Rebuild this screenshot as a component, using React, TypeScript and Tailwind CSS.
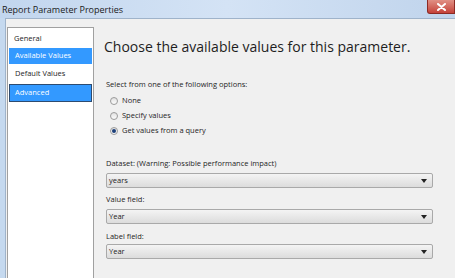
import React from "react";

const font = { fontFamily: "'Open Sans', 'Noto Sans', sans-serif" };

function Radio({ checked, label }: { checked?: boolean; label: string }) {
  return (
    <div className="flex items-center gap-[4px] h-[15px]">
      <div className="w-[8px] h-[8px] rounded-full border border-[#9a9a9a] bg-gradient-to-b from-[#e2e2e2] to-[#fbfbfb] flex items-center justify-center">
        {checked && <div className="w-[4px] h-[4px] rounded-full bg-[#1c3f7a]" />}
      </div>
      <span className="text-[7.5px] text-[#1e1e1e]">{label}</span>
    </div>
  );
}

function Select({ value }: { value: string }) {
  return (
    <div className="h-[15px] w-[327px] rounded-[2px] border border-[#a9a9a9] bg-gradient-to-b from-[#f4f4f4] to-[#dcdcdc] flex items-center justify-between pl-[2px] pr-[5px]">
      <span className="text-[7.5px] text-[#1e1e1e] leading-none">{value}</span>
      <svg width="6" height="4" viewBox="0 0 6 4">
        <path d="M0 0 H6 L3 4 Z" fill="#222" />
      </svg>
    </div>
  );
}

export default function App() {
  return (
    <div className="w-[455px] h-[278px] overflow-hidden bg-[#c5d9ef] flex flex-col" style={font}>
      <div className="h-[18px] flex items-start justify-between bg-gradient-to-r from-[#c2d6ee] via-[#d4e3f5] to-[#c0d4ec]">
        <span className="text-[9px] text-[#1a1a1a] pl-[2px] pt-[5px] leading-none">Report Parameter Properties</span>
        <div className="w-[28px] h-[14px] rounded-bl-[3px] bg-gradient-to-b from-[#e08f84] to-[#c4413a] border border-[#8c2a24] border-t-0 flex items-center justify-center">
          <svg width="9" height="8" viewBox="0 0 9 8">
            <path d="M1 1 L8 7 M8 1 L1 7" stroke="#fff" strokeWidth="2" strokeLinecap="round" />
          </svg>
        </div>
      </div>
      <div className="flex-1 flex pl-[5px]">
        <div className="flex-1 bg-[#f0f0f0] border-l border-t border-[#9fb3ca] flex pl-[1px] pt-[8px]">
          <div className="w-[87px] bg-white border border-[#a0a0a0] border-b-0 pt-[2px] px-[1px] text-[7.5px]">
            <div className="h-[18px] flex items-center pl-[5px] text-[#1e1e1e]">General</div>
            <div className="h-[16px] flex items-center pl-[6px] bg-[#3399ff] text-white">Available Values</div>
            <div className="h-[20px] flex items-center pl-[6px] text-[#1e1e1e]">Default Values</div>
            <div className="h-[18px] flex items-center pl-[5px] bg-[#3399ff] text-white border border-[#2d4b70]">Advanced</div>
          </div>
          <div className="flex-1 pl-[12px] pt-[9px]">
            <div className="-ml-[2px] text-[14px] text-[#1e1e1e] leading-[22px]">Choose the available values for this parameter.</div>
            <div className="mt-[20px] text-[7.5px] text-[#1e1e1e] leading-[12px]">Select from one of the following options:</div>
            <div className="pl-[4px] mt-[3px] flex flex-col">
              <Radio label="None" />
              <Radio label="Specify values" />
              <Radio checked label="Get values from a query" />
            </div>
            <div className="flex flex-col">
              <div className="mt-[19px] text-[7.5px] text-[#1e1e1e] leading-[12px]">Dataset: (Warning: Possible performance impact)</div>
              <div className="mt-[4px]"><Select value="years" /></div>
              <div className="mt-[5px] text-[7.5px] text-[#1e1e1e] leading-[12px]">Value field:</div>
              <div className="mt-[4px]"><Select value="Year" /></div>
              <div className="mt-[6px] text-[7.5px] text-[#1e1e1e] leading-[12px]">Label field:</div>
              <div className="mt-[2px]"><Select value="Year" /></div>
            </div>
          </div>
        </div>
      </div>
    </div>
  );
}
